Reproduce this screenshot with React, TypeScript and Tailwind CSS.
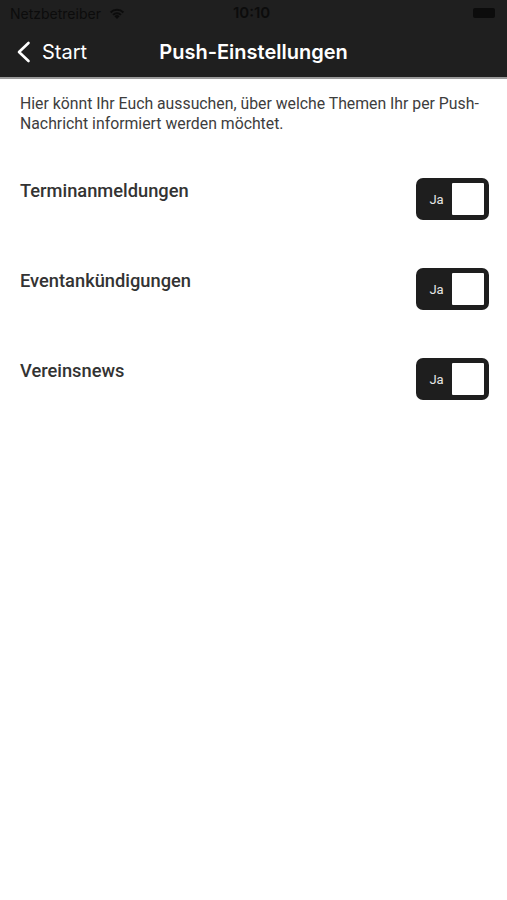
const topics = ['Terminanmeldungen', 'Eventankündigungen', 'Vereinsnews']

function Toggle() {
  return (
    <div className="flex h-[42px] w-[73px] items-center rounded-[7px] bg-[#1e1e1e] p-[5px]">
      <span className="flex-1 text-center text-[13px] leading-none text-[#e6e6e6]">Ja</span>
      <div className="h-full w-[32px] rounded-[1px] bg-white" />
    </div>
  )
}

function StatusBar() {
  return (
    <div className="relative flex h-[26px] items-center px-[10px] text-[14px] text-[#0c0c0c] font-['Inter',sans-serif]">
      <span>Netzbetreiber</span>
      <svg className="ml-[8px]" width="16" height="12" viewBox="0 0 16 12" fill="#0c0c0c">
        <path d="M8 12 L5.4 9.3 A3.6 3.6 0 0 1 10.6 9.3 Z" />
        <path d="M3.3 7.2 A6.6 6.6 0 0 1 12.7 7.2 L11.3 8.6 A4.7 4.7 0 0 0 4.7 8.6 Z" />
        <path d="M0.9 4.8 A10 10 0 0 1 15.1 4.8 L13.7 6.2 A8 8 0 0 0 2.3 6.2 Z" />
      </svg>
      <span className="absolute left-[233px] text-[15px] font-semibold">10:10</span>
      <div className="ml-auto mr-[2px] h-[10px] w-[22px] rounded-[2px] bg-[#0c0c0c]" />
    </div>
  )
}

export default function App() {
  return (
    <div className="min-h-[900px] w-full bg-white font-['Roboto',sans-serif]">
      <div className="bg-[#1f1f1f]">
        <StatusBar />
        <div className="relative flex h-[51px] items-center font-['Inter',sans-serif]">
          <div className="flex items-center pl-[16px] text-[20px] text-white">
            <svg width="15" height="22" viewBox="0 0 15 22" fill="none" stroke="white" strokeWidth="2.6" strokeLinecap="round" strokeLinejoin="round">
              <path d="M12.5 2 L3 11 L12.5 20" />
            </svg>
            <span className="ml-[11px]">Start</span>
          </div>
          <span className="absolute left-0 right-0 text-center text-[20px] font-semibold text-white">
            Push-Einstellungen
          </span>
        </div>
      </div>
      <div className="h-[2px] bg-[#9a9a9a]" />

      <p className="px-[20px] pt-[15px] text-[15.8px] leading-[20px] text-[#3d3d3d]">
        Hier könnt Ihr Euch aussuchen, über welche Themen Ihr per Push-Nachricht informiert werden möchtet.
      </p>

      <div className="mt-[44px] flex flex-col gap-[48px] pl-[20px] pr-[18px]">
        {topics.map((t) => (
          <div key={t} className="flex items-start justify-between">
            <span className="mt-[-1px] text-[18.3px] font-medium text-[#333333]">{t}</span>
            <Toggle />
          </div>
        ))}
      </div>
    </div>
  )
}
